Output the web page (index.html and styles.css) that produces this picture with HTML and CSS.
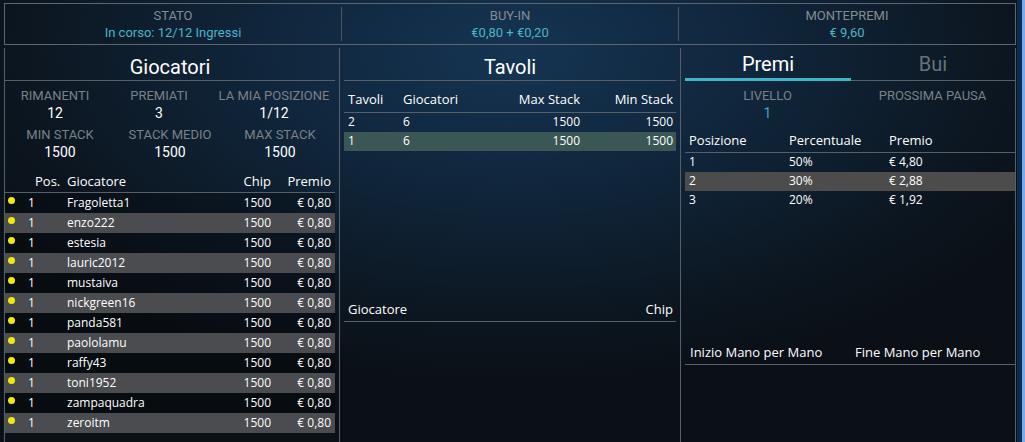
FILE: index.html
```html
<!DOCTYPE html>
<html lang="it">
<head>
    <meta charset="UTF-8">
    <meta name="viewport" content="width=device-width, initial-scale=1.0">
    <title>Torneo</title>
    <link rel="stylesheet" href="styles.css">
</head>
<body>
    <div class="window">
        <div class="main">
            <div class="summary">
                <div class="summary-cell">
                    <div class="summary-label">STATO</div>
                    <div class="summary-value">In corso: 12/12 Ingressi</div>
                </div>
                <div class="summary-cell">
                    <div class="summary-label">BUY-IN</div>
                    <div class="summary-value">€0,80 + €0,20</div>
                </div>
                <div class="summary-cell">
                    <div class="summary-label">MONTEPREMI</div>
                    <div class="summary-value">€ 9,60</div>
                </div>
            </div>

            <div class="panels">
                <!-- Giocatori -->
                <div class="panel panel-players">
                    <div class="panel-title">Giocatori</div>
                    <div class="stats stats-first">
                        <div class="stat"><div class="stat-label">RIMANENTI</div><div class="stat-value">12</div></div>
                        <div class="stat"><div class="stat-label">PREMIATI</div><div class="stat-value">3</div></div>
                        <div class="stat"><div class="stat-label">LA MIA POSIZIONE</div><div class="stat-value">1/12</div></div>
                    </div>
                    <div class="stats stats-second">
                        <div class="stat"><div class="stat-label">MIN STACK</div><div class="stat-value">1500</div></div>
                        <div class="stat"><div class="stat-label">STACK MEDIO</div><div class="stat-value">1500</div></div>
                        <div class="stat"><div class="stat-label">MAX STACK</div><div class="stat-value">1500</div></div>
                    </div>
                    <div class="players-head">
                        <span></span>
                        <span class="head-pos">Pos.</span>
                        <span>Giocatore</span>
                        <span class="num">Chip</span>
                        <span class="num">Premio</span>
                    </div>
                    <div class="players-list" id="players"></div>
                </div>

                <!-- Tavoli -->
                <div class="panel panel-tables">
                    <div class="panel-title">Tavoli</div>
                    <div class="tables-head">
                        <span>Tavoli</span>
                        <span>Giocatori</span>
                        <span class="num">Max Stack</span>
                        <span class="num">Min Stack</span>
                    </div>
                    <div class="tables-row">
                        <span>2</span><span>6</span><span class="num">1500</span><span class="num">1500</span>
                    </div>
                    <div class="tables-row selected">
                        <span>1</span><span>6</span><span class="num">1500</span><span class="num">1500</span>
                    </div>
                    <div class="seat-head">
                        <span>Giocatore</span>
                        <span class="num">Chip</span>
                    </div>
                </div>

                <!-- Premi / Bui -->
                <div class="panel panel-prizes">
                    <div class="tabs">
                        <div class="tab active">Premi</div>
                        <div class="tab">Bui</div>
                    </div>
                    <div class="stats stats-level">
                        <div class="stat"><div class="stat-label">LIVELLO</div><div class="stat-value teal">1</div></div>
                        <div class="stat"><div class="stat-label">PROSSIMA PAUSA</div><div class="stat-value"></div></div>
                    </div>
                    <div class="prizes-head">
                        <span>Posizione</span>
                        <span>Percentuale</span>
                        <span>Premio</span>
                    </div>
                    <div class="prizes-row"><span>1</span><span>50%</span><span>€ 4,80</span></div>
                    <div class="prizes-row selected"><span>2</span><span>30%</span><span>€ 2,88</span></div>
                    <div class="prizes-row"><span>3</span><span>20%</span><span>€ 1,92</span></div>
                    <div class="hands-head">
                        <span>Inizio Mano per Mano</span>
                        <span>Fine Mano per Mano</span>
                    </div>
                </div>
            </div>
        </div>
        <div class="edge"></div>
    </div>

    <script>
        const players = ['Fragoletta1', 'enzo222', 'estesia', 'lauric2012', 'mustaiva', 'nickgreen16',
            'panda581', 'paololamu', 'raffy43', 'toni1952', 'zampaquadra', 'zeroitm'];

        const list = document.getElementById('players');
        players.forEach(function (name) {
            const row = document.createElement('div');
            row.className = 'players-row';
            row.innerHTML = '<span class="dot-cell"><i class="dot"></i></span>' +
                '<span>1</span><span>' + name + '</span>' +
                '<span class="num">1500</span><span class="num">€ 0,80</span>';
            list.appendChild(row);
        });
    </script>
</body>
</html>
```

FILE: styles.css
```css
html, body {
    margin: 0;
    padding: 0;
    height: 100%;
}

body {
    font-family: Roboto, "Open Sans", sans-serif;
    color: #ffffff;
    background-color: #0b1118;
    background-image: radial-gradient(ellipse 60% 75% at 50% 12%, #153452 0%, #10263c 40%, #0c1620 80%, #0a1016 100%);
    overflow: hidden;
}

.window {
    display: flex;
    height: 100%;
}

.main {
    flex: 1;
    padding: 3px 1px 0 4px;
    display: flex;
    flex-direction: column;
}

.edge {
    width: 3px;
    border-left: 5px solid #0e2c4f;
    background: #76abee;
}

/* summary bar */
.summary {
    display: flex;
    height: 40px;
    border: 1px solid #5c6670;
}

.summary-cell {
    flex: 1;
    text-align: center;
    margin: 3px 0;
    padding-top: 1px;
}

.summary-cell + .summary-cell {
    border-left: 1px solid #4e5862;
}

.summary-label {
    font-size: 13px;
    line-height: 16px;
    color: #858b92;
}

.summary-value {
    font-size: 13px;
    line-height: 17px;
    color: #4cb4c6;
}

/* panels */
.panels {
    flex: 1;
    display: flex;
    margin-top: 3px;
}

.panel {
    border-left: 1px solid #56606a;
    box-sizing: border-box;
}

.panel-players {
    width: 335px;
    padding-right: 4px;
}

.panel-tables {
    width: 341px;
    padding: 0 4px;
}

.panel-prizes {
    width: 336px;
    padding-left: 4px;
    border-right: 1px solid #56606a;
}

.panel-title {
    height: 33px;
    box-sizing: border-box;
    padding-top: 7px;
    font-size: 20px;
    line-height: 24px;
    text-align: center;
    border-bottom: 1px solid #56606a;
}

/* stats */
.stats {
    display: grid;
    grid-template-columns: 1fr 1fr 1fr;
    text-align: center;
}

.stats-first {
    grid-template-columns: 100px 108px 1fr;
    margin-top: 6px;
}

.stats-second {
    margin-top: 4px;
}

.stat-label {
    font-size: 13px;
    line-height: 17px;
    color: #7a8188;
    white-space: nowrap;
}

.stat-value {
    font-size: 14px;
    line-height: 18px;
    color: #ffffff;
    min-height: 18px;
}

.stat-value.teal {
    color: #3ba7c2;
}

.num {
    text-align: right;
}

/* players table */
.players-head, .players-row {
    display: grid;
    grid-template-columns: 22px 40px 1fr 45px 60px;
    padding-right: 4px;
    font-family: "Open Sans", sans-serif;
}

.players-head {
    margin-top: 9px;
    font-size: 13px;
    line-height: 22px;
    border-bottom: 1px solid #56606a;
}

.head-pos {
    padding-left: 8px;
}

.players-row {
    height: 20px;
    font-size: 12px;
    line-height: 20px;
    background: rgba(0, 0, 0, 0.22);
}

.players-row:nth-child(even) {
    background: #4a4c50;
}

.players-row span:nth-child(2) {
    padding-left: 1px;
}

.dot-cell {
    position: relative;
}

.dot {
    position: absolute;
    left: 3px;
    top: 4px;
    width: 7px;
    height: 7px;
    border-radius: 50%;
    background: #f2ea0a;
}

/* tables */
.tables-head, .tables-row {
    display: grid;
    grid-template-columns: 55px 80px 1fr 93px;
    padding: 0 3px 0 4px;
    font-family: "Open Sans", sans-serif;
}

.tables-head {
    padding-top: 8px;
    font-size: 13px;
    line-height: 20px;
    padding-bottom: 3px;
    border-bottom: 1px solid #56606a;
}

.tables-row {
    height: 19px;
    font-size: 12px;
    line-height: 17px;
}

.tables-row.selected {
    background: #3b5755;
}

.seat-head {
    display: flex;
    justify-content: space-between;
    margin-top: 148px;
    padding: 0 3px 2px 4px;
    font-family: "Open Sans", sans-serif;
    font-size: 13px;
    line-height: 20px;
    border-bottom: 1px solid #56606a;
}

/* prizes */
.tabs {
    display: grid;
    grid-template-columns: 166px 1fr;
}

.tab {
    height: 33px;
    box-sizing: border-box;
    padding-top: 4px;
    font-size: 20px;
    line-height: 24px;
    text-align: center;
    color: #68727c;
    border-bottom: 1px solid #56606a;
}

.tab.active {
    color: #ffffff;
    border-bottom: 3px solid #3db6c6;
}

.stats-level {
    grid-template-columns: 1fr 1fr;
    margin-top: 6px;
}

.prizes-head, .prizes-row {
    display: grid;
    grid-template-columns: 100px 100px 1fr;
    padding-left: 4px;
    font-family: "Open Sans", sans-serif;
}

.prizes-head {
    margin-top: 8px;
    font-size: 13px;
    line-height: 20px;
    padding-top: 0;
    padding-bottom: 2px;
    border-bottom: 1px solid #56606a;
}

.prizes-row {
    height: 19px;
    font-size: 12px;
    line-height: 17px;
}

.prizes-row.selected {
    background: #4c4c4c;
}

.hands-head {
    display: grid;
    grid-template-columns: 165px 1fr;
    margin-top: 132px;
    padding: 0 0 2px 5px;
    font-family: "Open Sans", sans-serif;
    font-size: 13px;
    line-height: 20px;
    border-bottom: 1px solid #56606a;
}
```
